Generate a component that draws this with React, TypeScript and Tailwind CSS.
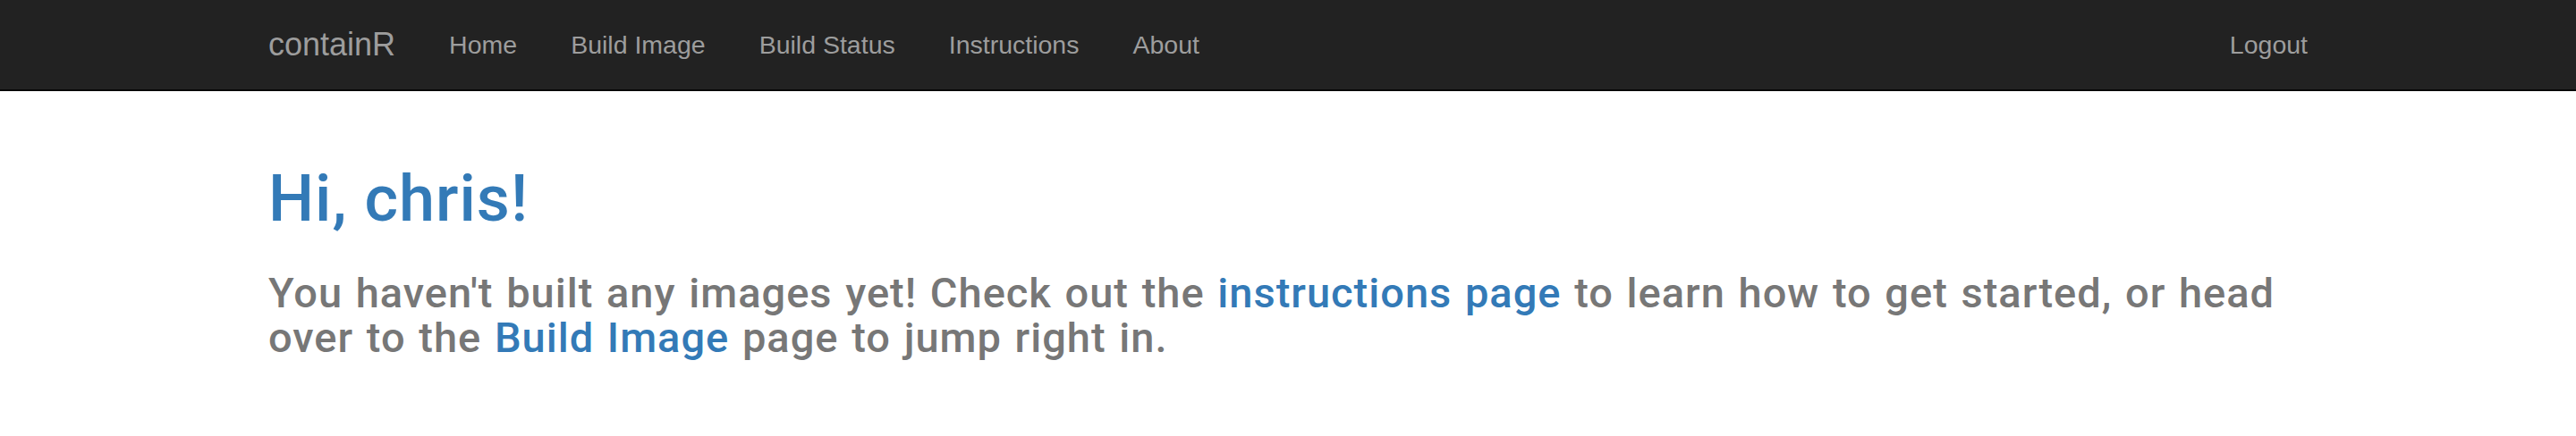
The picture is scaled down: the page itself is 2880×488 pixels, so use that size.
import React from "react";

const font = { fontFamily: '"Liberation Sans", Arial, Helvetica, sans-serif' };
const headFont = { fontFamily: 'Roboto, "Liberation Sans", Arial, sans-serif' };

export default function App() {
  const links = ["Home", "Build Image", "Build Status", "Instructions", "About"];
  return (
    <div className="min-h-[488px] bg-white" style={font}>
      <nav className="h-[102px] bg-[#222222] border-b-2 border-[#080808]">
        <div className="w-[2340px] mx-auto px-[30px] flex justify-between">
          <div className="flex -ml-[30px]">
            <a className="h-[100px] px-[30px] py-[30px] text-[36px] leading-[40px] text-[#9d9d9d]">containR</a>
            <ul className="flex">
              {links.map((l) => (
                <li key={l}>
                  <a className="block px-[30px] py-[30px] text-[28.5px] leading-[40px] text-[#9d9d9d]">{l}</a>
                </li>
              ))}
            </ul>
          </div>
          <ul className="flex -mr-[30px]">
            <li>
              <a className="block px-[30px] py-[30px] text-[28.5px] leading-[40px] text-[#9d9d9d]">Logout</a>
            </li>
          </ul>
        </div>
      </nav>
      <div className="w-[2340px] mx-auto px-[30px] pt-[81px]" style={headFont}>
        <h1 className="text-[72px] leading-[79px] font-medium tracking-[1px] text-[#337ab7]">Hi, chris!</h1>
        <h3 className="mt-[41px] text-[47px] leading-[50px] font-medium tracking-[1px] [word-spacing:2px] text-[#777777]">
          You haven't built any images yet! Check out the{" "}
          <a className="text-[#337ab7]">instructions page</a> to learn how to get started, or head over to the{" "}
          <a className="text-[#337ab7]">Build Image</a> page to jump right in.
        </h3>
      </div>
    </div>
  );
}
